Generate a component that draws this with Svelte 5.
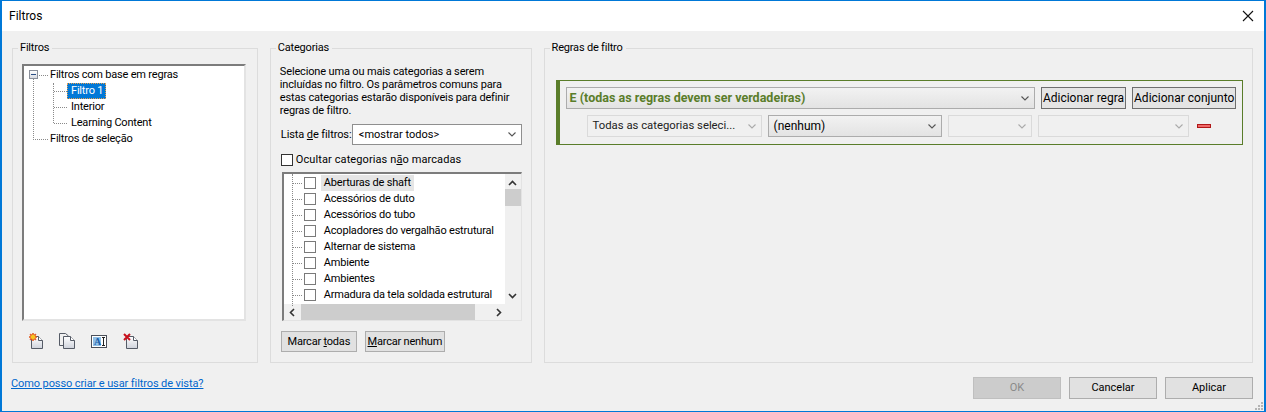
<script>
  const categories = [
    'Aberturas de shaft',
    'Acessórios de duto',
    'Acessórios do tubo',
    'Acopladores do vergalhão estrutural',
    'Alternar de sistema',
    'Ambiente',
    'Ambientes',
    'Armadura da tela soldada estrutural'
  ];
  const childFilters = ['Filtro 1', 'Interior', 'Learning Content'];
</script>

{#snippet chevron()}
  <svg class="chev" width="8" height="5" viewBox="0 0 8 5"><path d="M.5 .5l3.5 3.5L7.5 .5" fill="none" stroke="currentColor" stroke-width="1.1" /></svg>
{/snippet}

{#snippet page(x, y)}
  <path d="M{x + .5} {y + .5}h7l4 4v8h-11z" fill="url(#pg)" stroke="#555b66" />
  <path d="M{x + 7.5} {y + .5}v4h4" fill="#fff" stroke="#555b66" />
{/snippet}

<div class="win">
  <header class="title">
    <span>Filtros</span>
    <svg width="12" height="12" viewBox="0 0 12 12"><path d="M1 1l10 10M11 1L1 11" stroke="#111" stroke-width="1.1" /></svg>
  </header>

  <div class="body">
    <div class="panels">
      <fieldset class="filters">
        <legend>Filtros</legend>
        <div class="tree">
          <div class="tree-root">
            <span class="expander"></span>
            <span class="vline outer"></span>
            <div class="node top">Filtros com base em regras</div>
            <div class="children">
              <span class="vline inner"></span>
              {#each childFilters as f, i}
                <div class="node child"><span class="leaf" class:sel={i === 0}>{f}</span></div>
              {/each}
            </div>
            <div class="node top">Filtros de seleção</div>
          </div>
        </div>
        <div class="tools">
          <svg width="16" height="17" viewBox="0 0 16 17">
            <defs>
              <linearGradient id="pg" x1="0" y1="0" x2="0" y2="1">
                <stop offset="0" stop-color="#fff" /><stop offset="1" stop-color="#cfd3dc" />
              </linearGradient>
            </defs>
            {@render page(2, 3)}
            <path d="M4 0l1 2 2-1-1 2 2 1-2 1 1 2-2-1-1 2-1-2-2 1 1-2-2-1 2-1-1-2 2 1z" fill="#f7c520" stroke="#e0471a" stroke-width=".8" />
          </svg>
          <svg width="17" height="17" viewBox="0 0 17 17">
            <path d="M4 12.5H.5v-12h6l3 2.5" fill="none" stroke="#555b66" />
            {@render page(4, 3)}
          </svg>
          <svg class="rename" width="16" height="13" viewBox="0 0 16 13">
            <rect x=".5" y=".5" width="15" height="12" fill="#fff" stroke="#4a4f59" />
            <rect x="2" y="2" width="8" height="9" fill="#8fc0e8" />
            <text x="3" y="10" class="glyph">A</text>
            <path d="M11 2.5h3M12.5 2.5v8M11 10.5h3" stroke="#222" fill="none" />
          </svg>
          <svg class="del" width="15" height="17" viewBox="0 0 15 17">
            {@render page(3, 3)}
            <path d="M1 1l6 6M7 1L1 7" stroke="#c8101c" stroke-width="2" />
          </svg>
        </div>
      </fieldset>

      <fieldset class="cats">
        <legend>Categorias</legend>
        <p>Selecione uma ou mais categorias a serem incluídas no filtro. Os parâmetros comuns para estas categorias estarão disponíveis para definir regras de filtro.</p>
        <div class="listrow">
          <span class="listlabel">Lista <u>d</u>e filtros:</span>
          <div class="combo white"><span>&lt;mostrar todos&gt;</span>{@render chevron()}</div>
        </div>
        <label class="hide"><span class="box dark"></span><span>Ocultar categorias n<u>ã</u>o marcadas</span></label>
        <div class="catlist">
          <div class="view">
            <div class="rows">
              <span class="vline cat"></span>
              {#each categories as c, i}
                <div class="row">
                  <span class="hdot"></span>
                  <span class="box"></span>
                  <span class="lbl" class:hl={i === 0}>{c}</span>
                </div>
              {/each}
            </div>
            <div class="vbar">
              <svg width="9" height="6" viewBox="0 0 9 6"><path d="M1 5l3.5-3.5L8 5" fill="none" stroke="#333" stroke-width="1.6" /></svg>
              <div class="vtrack"><div class="vthumb"></div></div>
              <svg width="9" height="6" viewBox="0 0 9 6"><path d="M1 1l3.5 3.5L8 1" fill="none" stroke="#333" stroke-width="1.6" /></svg>
            </div>
          </div>
          <div class="hbar">
            <svg width="6" height="9" viewBox="0 0 6 9"><path d="M5 1L1.5 4.5 5 8" fill="none" stroke="#333" stroke-width="1.6" /></svg>
            <div class="hthumb"></div>
            <svg width="6" height="9" viewBox="0 0 6 9"><path d="M1 1l3.5 3.5L1 8" fill="none" stroke="#333" stroke-width="1.6" /></svg>
          </div>
        </div>
        <div class="markbtns">
          <button class="btn todas">Marcar <u>t</u>odas</button>
          <button class="btn nenhum"><u>M</u>arcar nenhum</button>
        </div>
      </fieldset>

      <fieldset class="rules">
        <legend>Regras de filtro</legend>
        <div class="set">
          <div class="set-head">
            <div class="combo grad bold"><span>E (todas as regras devem ser verdadeiras)</span>{@render chevron()}</div>
            <button class="btn add regra">Adicionar regra</button>
            <button class="btn add conj">Adicionar conjunto</button>
          </div>
          <div class="set-rule">
            <div class="combo off w-cat"><span>Todas as categorias seleci...</span>{@render chevron()}</div>
            <div class="combo grad w-none"><span>(nenhum)</span>{@render chevron()}</div>
            <div class="combo off w-a">{@render chevron()}</div>
            <div class="combo off w-b">{@render chevron()}</div>
            <span class="minus"></span>
          </div>
        </div>
      </fieldset>
    </div>

    <footer>
      <a href="#help">Como posso criar e usar filtros de vista?</a>
      <div class="actions">
        <button class="btn act" disabled>OK</button>
        <button class="btn act">Cancelar</button>
        <button class="btn act">Aplicar</button>
      </div>
    </footer>
    <svg class="grip" width="10" height="10" viewBox="0 0 10 10" fill="#b4b4b4">
      <rect x="7" y="1" width="2" height="2" /><rect x="4" y="4" width="2" height="2" /><rect x="7" y="4" width="2" height="2" />
      <rect x="1" y="7" width="2" height="2" /><rect x="4" y="7" width="2" height="2" /><rect x="7" y="7" width="2" height="2" />
    </svg>
  </div>
</div>

<style>
  :global(body) { margin: 0; }
  .win {
    width: 1266px; height: 412px; box-sizing: border-box;
    border: 1px solid #0078d7; border-right-width: 2px; border-left-width: 2px;
    display: flex; flex-direction: column;
    font: 11px/16px Roboto, "Noto Sans", sans-serif; color: #000;
    letter-spacing: -0.2px;
    background: #f0f0f0;
  }
  .title {
    height: 30px; flex: none; background: #fff; display: flex; align-items: center;
    justify-content: space-between; padding: 0 10px 0 7px; font-size: 12px; letter-spacing: 0;
  }
  .body { flex: 1; position: relative; display: flex; flex-direction: column; padding: 10px 11px 0 10px; }
  .panels { display: flex; gap: 12px; height: 322px; flex: none; }
  fieldset {
    margin: 0; padding: 0; box-sizing: border-box; min-width: 0;
    border: 1px solid #dcdcdc; height: 100%;
  }
  legend { padding: 0 3px 0 2px; line-height: 14px; }
  .filters { width: 246px; padding: 9px 11px 0 9px; }
  .filters legend { margin-left: -4px; }
  .cats { width: 262px; padding: 9px 10px 0 10px; }
  .cats legend { margin-left: -5px; }
  .rules { width: 710px; padding: 23px 9px 0 11px; }
  .rules legend { margin-left: -6px; }

  .tree {
    height: 257px; box-sizing: border-box; background: #fff;
    border: 2px solid #e3e3e3; border-top-color: #7c7c7c; border-left-color: #7c7c7c;
    padding: 1px 0 0 0;
  }
  .tree-root { position: relative; padding-left: 26px; }
  .node { height: 16px; position: relative; white-space: nowrap; }
  .node.top::before {
    content: ''; position: absolute; left: -17px; width: 15px; top: 8px; border-top: 1px dotted #8a8a8a;
  }
  .children { position: relative; padding-left: 17px; }
  .node.child::before {
    content: ''; position: absolute; left: -13px; width: 13px; top: 8px; border-top: 1px dotted #8a8a8a;
  }
  .leaf { display: inline-block; padding: 0 3px 0 4px; height: 16px; box-sizing: border-box; line-height: 16px; }
  .leaf.sel { background: #0078d7; color: #fff; outline: 1px dotted #e8a050; outline-offset: -1px; }
  .expander {
    position: absolute; left: 5px; top: 3px; width: 9px; height: 9px; box-sizing: border-box; z-index: 1;
    border: 1px solid #8a8f9a; background: linear-gradient(#fff, #d8dbe2);
  }
  .expander::after { content: ''; position: absolute; left: 1px; right: 1px; top: 3px; border-top: 1px solid #2b4f86; }
  .vline { position: absolute; border-left: 1px dotted #8a8a8a; }
  .vline.outer { left: 9px; top: 12px; height: 61px; }
  .vline.inner { left: 3px; top: 0; height: 40px; }
  .vline.cat { left: 8px; top: 0; height: 132px; }

  .tools { display: flex; align-items: flex-end; gap: 14px; padding: 12px 0 0 7px; }
  .rename { margin: 0 1px 2px; }
  .del { margin-left: 1px; }
  .glyph { font: 700 10px "Liberation Serif", serif; fill: #1c5fa8; letter-spacing: 0; }

  .cats p { margin: 1px 0 0 -1px; line-height: 13px; width: 241px; letter-spacing: -0.15px; }
  .listrow { display: flex; align-items: center; margin-top: 7px; white-space: nowrap; }
  .listlabel { width: 71px; flex: none; letter-spacing: -0.1px; }
  .combo {
    display: flex; align-items: center; justify-content: space-between; box-sizing: border-box;
    height: 22px; padding: 0 5px 0 4px; white-space: nowrap; overflow: hidden;
    border: 1px solid #acacac; color: #000; letter-spacing: 0;
  }
  .chev { flex: none; color: #555; }
  .combo.white { background: #fff; width: 170px; flex: none; height: 21px; border-color: #8f8f8f; padding-left: 6px; }
  .combo.grad { background: linear-gradient(#f2f2f2, #e3e3e3); }
  .combo.off { background: #f0f0f0; border-color: #dadada; }
  .combo.off .chev { color: #aaa; }
  .combo.bold { flex: none; width: 469px; padding-left: 3px; font-weight: 700; font-size: 12.5px; color: #5a7d2a; }
  .hide { display: flex; align-items: center; gap: 3px; margin-top: 8px; height: 14px; letter-spacing: 0.1px; }
  .box { width: 12px; height: 12px; box-sizing: border-box; flex: none; background: #fff; border: 1px solid #7a7a7a; }
  .box.dark { border-color: #333; }
  .catlist {
    margin: 5px 0 0 1px; width: 240px; height: 149px; box-sizing: border-box; background: #fff;
    border: 1px solid #e3e3e3; border-top: 2px solid #7c7c7c; border-left: 2px solid #7c7c7c;
    display: flex; flex-direction: column;
  }
  .view { display: flex; flex: 1; min-height: 0; }
  .rows { flex: 1; min-width: 0; position: relative; padding-top: 1px; }
  .row { height: 16px; display: flex; align-items: center; position: relative; padding-left: 20px; white-space: nowrap; }
  .hdot { position: absolute; left: 8px; width: 10px; top: 8px; border-top: 1px dotted #8a8a8a; }
  .lbl { margin-left: 5px; padding: 0 3px; }
  .lbl.hl { background: #e5e5e5; }
  .vbar { width: 16px; flex: none; background: #f0f0f0; display: flex; flex-direction: column; align-items: center; justify-content: space-between; padding: 6px 0 5px; box-sizing: border-box; }
  .vtrack { flex: 1; width: 100%; margin-top: 3px; }
  .vthumb { height: 17px; background: #cdcdcd; }
  .hbar { height: 16px; flex: none; background: #f0f0f0; display: flex; align-items: center; padding-left: 5px; }
  .hthumb { width: 174px; height: 16px; background: #cdcdcd; margin: 0 21px 0 6px; }
  .markbtns { display: flex; gap: 8px; margin: 10px 0 0; }
  .btn {
    font: inherit; letter-spacing: inherit; color: #000; height: 21px; padding: 0; box-sizing: border-box; white-space: nowrap;
    background: #e1e1e1; border: 1px solid #adadad;
  }
  .todas { width: 76px; }
  .nenhum { width: 80px; }

  .set {
    box-sizing: border-box; height: 65px; padding: 6px 6px 0 6px; margin-top: 2px;
    border: 1px solid #5a7d2a; border-left-width: 4px;
    display: flex; flex-direction: column; gap: 6px;
  }
  .set-head { display: flex; gap: 6px; }
  .add { height: 22px; border-color: #6e6e6e; font-size: 12px; letter-spacing: 0; background: #e4e4e4; }
  .regra { width: 86px; }
  .conj { width: 104px; }
  .set-rule { display: flex; gap: 6px; align-items: center; padding-left: 21px; }
  .w-cat { width: 175px; padding-left: 5px; font-size: 11.3px; color: #222; }
  .w-none { width: 174px; padding-left: 5px; font-size: 12px; }
  .w-a { width: 84px; justify-content: flex-end; }
  .w-b { width: 151px; justify-content: flex-end; }
  .minus { width: 14px; height: 4px; box-sizing: border-box; margin-left: 2px; background: #f06a6a; border: 1px solid #b01818; }

  footer { display: flex; justify-content: space-between; align-items: flex-start; padding-top: 13px; margin-left: -1px; }
  a { color: #0066cc; text-decoration: underline; letter-spacing: -0.1px; }
  .actions { display: flex; gap: 8px; margin-top: 1px; }
  .act { width: 88px; height: 22px; letter-spacing: 0; }
  .act:disabled { background: #ccc; color: #8a8a8a; border-color: #bfbfbf; }
  .grip { position: absolute; right: 0; bottom: 0; }
</style>
